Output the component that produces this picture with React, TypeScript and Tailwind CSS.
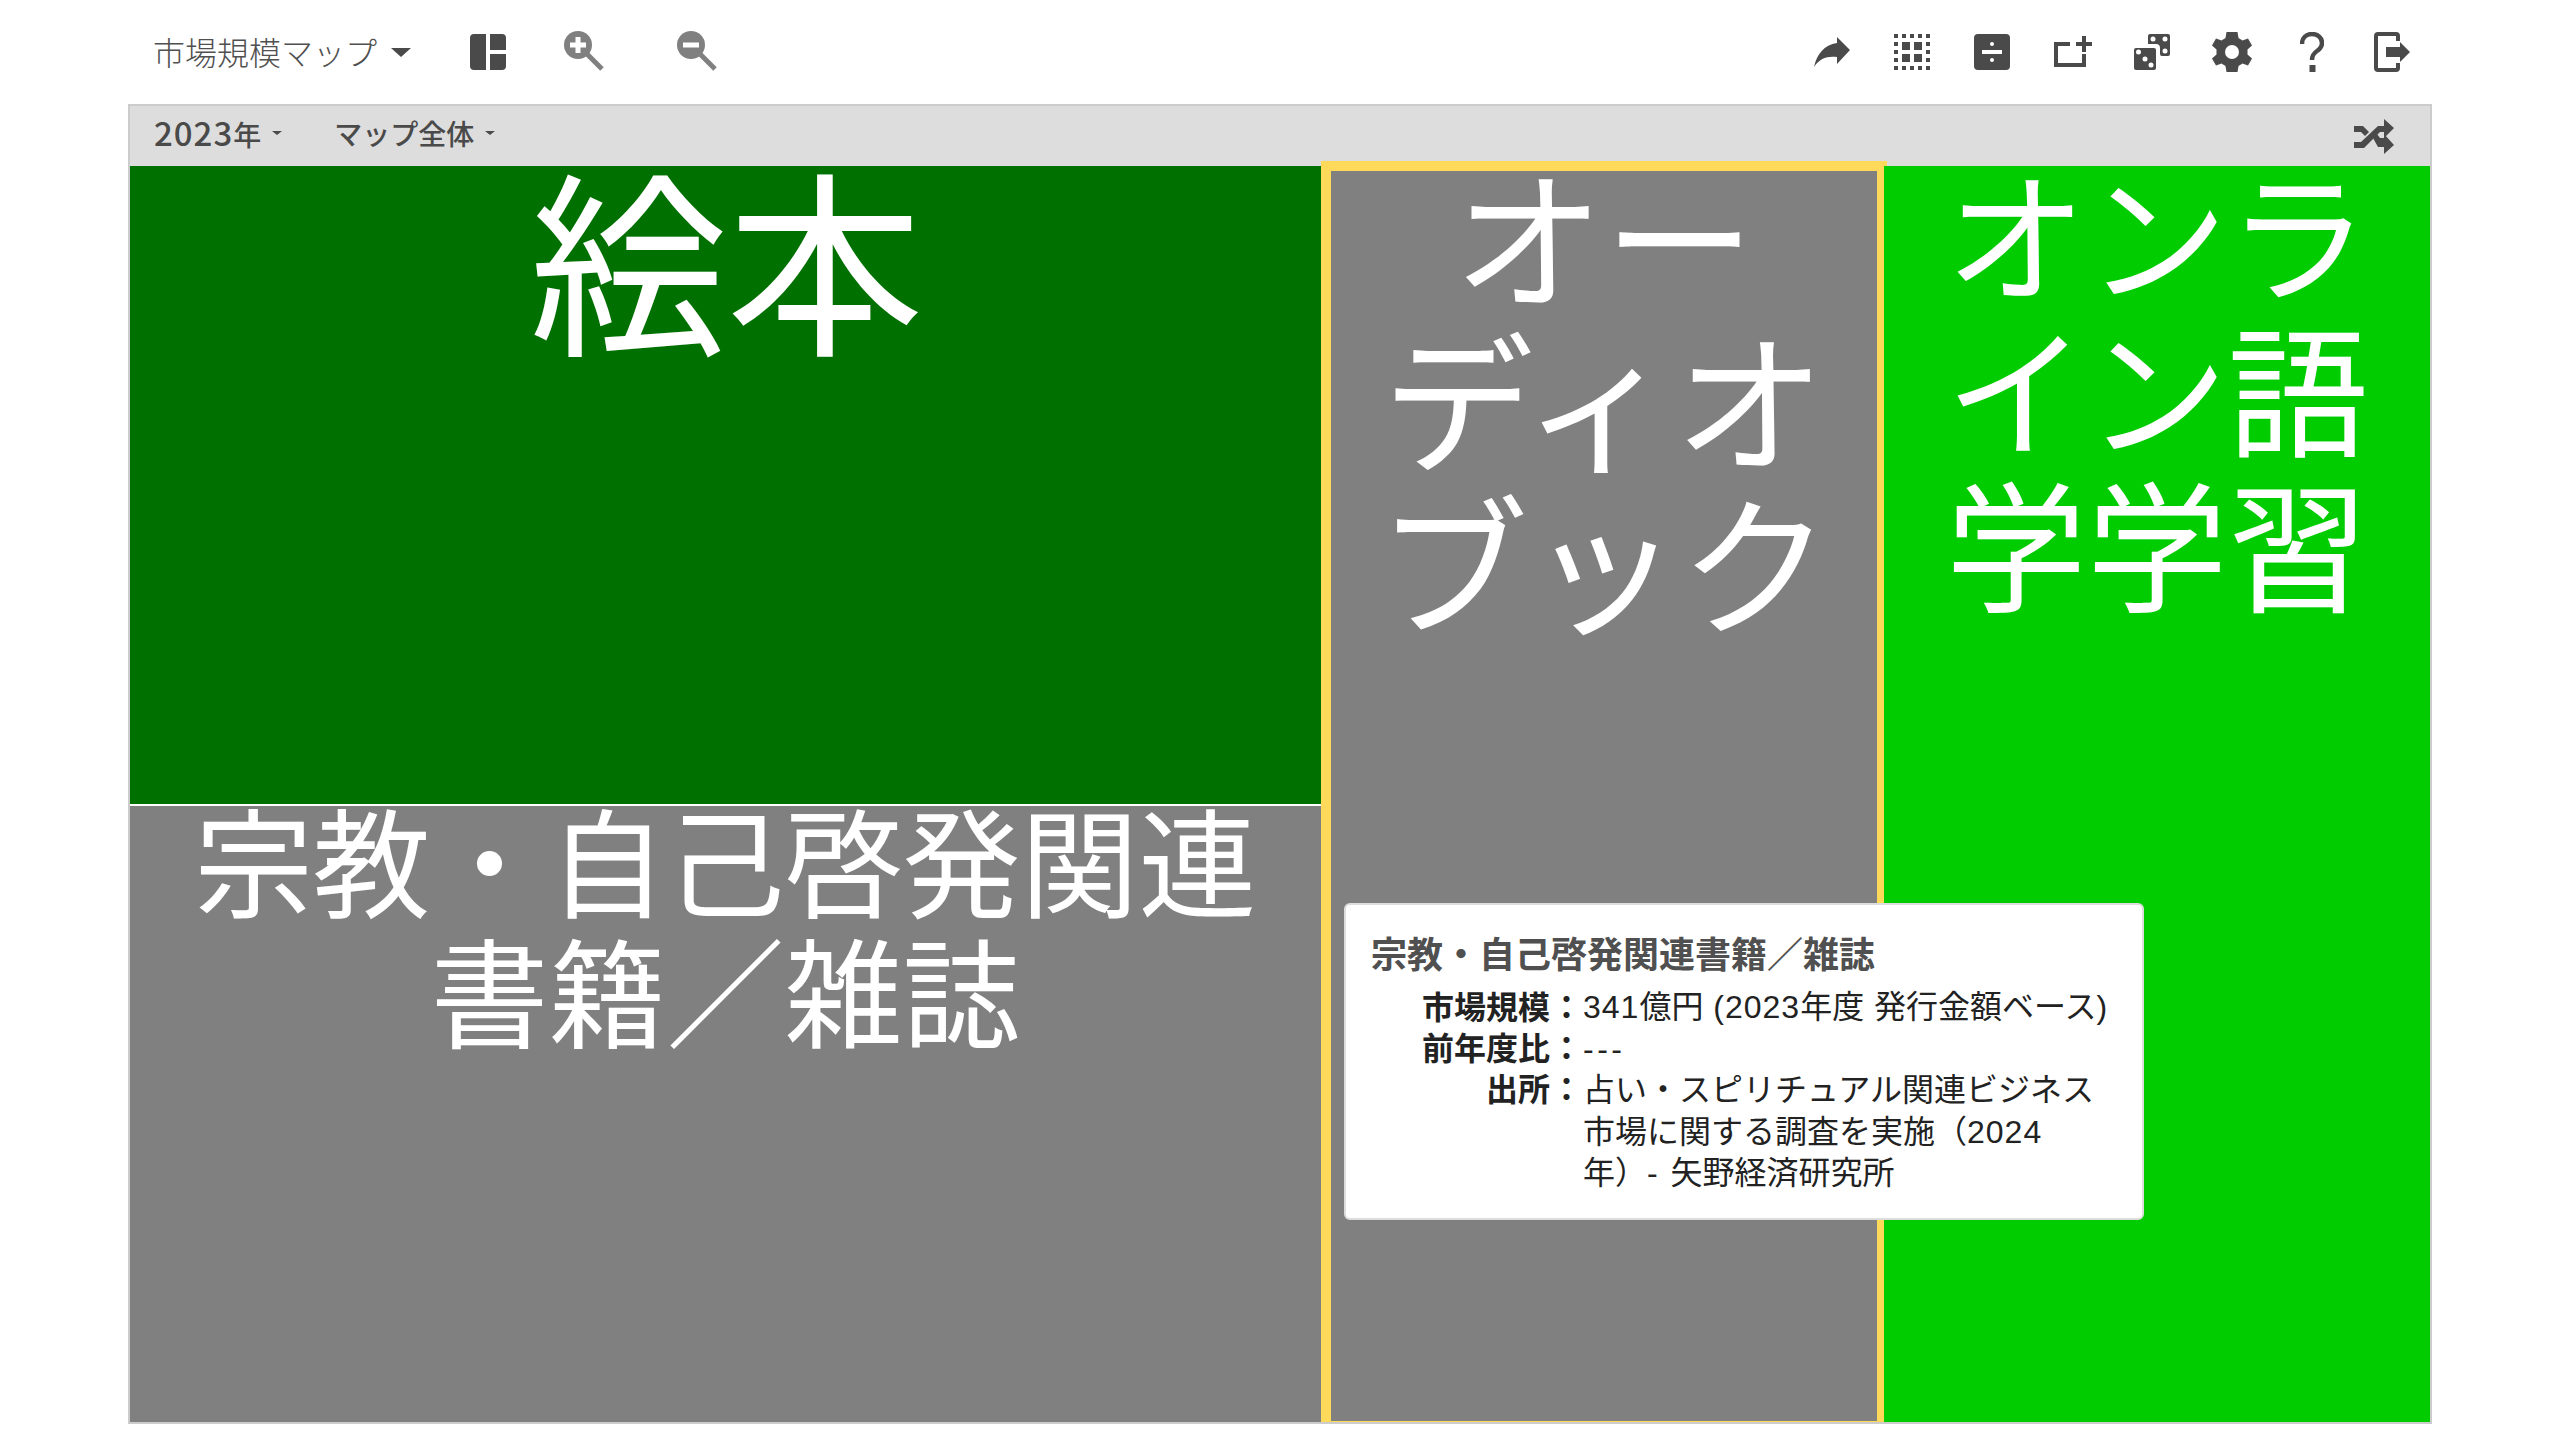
function LayoutIcon() {
  return (
    <svg width="36" height="36" viewBox="0 0 36 36" fill="#4a4a4a">
      <path d="M4 0h12v36H4a4 4 0 0 1-4-4V4a4 4 0 0 1 4-4Z" />
      <path d="M20 0h12a4 4 0 0 1 4 4v12H20Z" />
      <path d="M20 20h16v12a4 4 0 0 1-4 4H20Z" />
    </svg>
  );
}

function ZoomIcon({ plus }: { plus?: boolean }) {
  return (
    <svg width="42" height="42" viewBox="0 0 42 42">
      <circle cx="14" cy="14" r="14" fill="#808080" />
      <path d="M22 22 38 38" stroke="#808080" strokeWidth="5" />
      <path d={plus ? "M6 14h16M14 6v16" : "M6 14h16"} stroke="#fff" strokeWidth="5" />
    </svg>
  );
}

function ShareIcon() {
  return (
    <svg width="36" height="30" viewBox="0 0 36 30" fill="#4a4a4a">
      <path d="M0 30C3 17 10 8 23 6V0l13 13-13 14v-7C13 19 6 21 0 30Z" />
    </svg>
  );
}

function GridIcon() {
  const dots = [2, 10, 18, 26, 34];
  return (
    <svg width="36" height="36" viewBox="0 0 36 36" fill="#4a4a4a">
      {dots.map((p) => (
        <g key={p}>
          <rect x={p - 2} y="0" width="4" height="4" />
          <rect x={p - 2} y="32" width="4" height="4" />
          <rect x="0" y={p - 2} width="4" height="4" />
          <rect x="32" y={p - 2} width="4" height="4" />
        </g>
      ))}
      <rect x="8" y="8" width="8" height="8" />
      <rect x="20" y="8" width="8" height="8" />
      <rect x="8" y="20" width="8" height="8" />
      <rect x="20" y="20" width="8" height="8" />
    </svg>
  );
}

function DivideIcon() {
  return (
    <svg width="36" height="36" viewBox="0 0 36 36">
      <rect width="36" height="36" rx="4" fill="#4a4a4a" />
      <rect x="8" y="16" width="20" height="4" fill="#fff" />
      <circle cx="18" cy="10" r="2" fill="#fff" />
      <circle cx="18" cy="26" r="2" fill="#fff" />
    </svg>
  );
}

function AddBoxIcon() {
  return (
    <svg width="38" height="32" viewBox="0 0 38 32" fill="#4a4a4a">
      <path d="M0 6h16v4H4v17h24v-9h4v13H0Z" />
      <path d="M28 0h4v6h6v4h-6v6h-4v-6h-6V6h6Z" />
    </svg>
  );
}

function DiceIcon() {
  return (
    <svg width="36" height="36" viewBox="0 0 36 36">
      <path
        fill="#4a4a4a"
        d="M14 2a2 2 0 0 1 2-2h18a2 2 0 0 1 2 2v18a2 2 0 0 1-2 2h-6a2 2 0 0 1-2-2v-6a4 4 0 0 0-4-4H14Z"
      />
      <rect x="0" y="14" width="22" height="22" rx="2" fill="#4a4a4a" />
      <g fill="#fff">
        <circle cx="19" cy="5" r="2.5" />
        <circle cx="31" cy="5" r="2.5" />
        <circle cx="31" cy="17" r="2.5" />
        <circle cx="4.5" cy="18" r="2.5" />
        <circle cx="11" cy="25" r="2.5" />
        <circle cx="17" cy="31" r="2.5" />
      </g>
    </svg>
  );
}

function GearIcon() {
  return (
    <svg width="40" height="40" viewBox="0 0 40 40">
      <path
        fill="#4a4a4a"
        d="M14.5 0h11l1 6 4 2.500 5.500-2 4 7-4.500 4v5l4.500 4-4 7-5.500-2-4 2.500-1 6h-11l-1-6-4-2.500-5.500 2-4-7 4.500-4v-5L0 13.500l4-7 5.500 2 4-2.500Z"
      />
      <circle cx="20" cy="20" r="7" fill="#fff" />
    </svg>
  );
}

function HelpIcon() {
  return (
    <svg width="24" height="40" viewBox="0 0 24 40" fill="none">
      <path d="M2 12C2 6 6 2 12 2s10 4 10 9c0 4-2 6-5 8-3 2-5 4-5 9" stroke="#4a4a4a" strokeWidth="4.5" />
      <rect x="9.500" y="33" width="6" height="7" fill="#4a4a4a" />
    </svg>
  );
}

function ExitIcon() {
  return (
    <svg width="36" height="40" viewBox="0 0 36 40">
      <path
        d="M24 9V4a2 2 0 0 0-2-2H4a2 2 0 0 0-2 2v32a2 2 0 0 0 2 2h18a2 2 0 0 0 2-2v-5"
        fill="none"
        stroke="#4a4a4a"
        strokeWidth="4"
      />
      <path fill="#4a4a4a" d="M12 15h14v-5l10 10-10 10v-5H12Z" />
    </svg>
  );
}

function ShuffleIcon() {
  return (
    <svg width="40" height="35" viewBox="0 0 40 35" fill="#4a4a4a">
      <path d="M0 7h9l6 6-4 4-4-4H0Z" />
      <path d="M0 23h7L24 7h6V0l10 9-10 10v-6h-4L10 29H0Z" />
      <path d="M19 19l4-4 3 4h4v-4l10 11-10 9v-7h-6Z" />
    </svg>
  );
}

function Caret() {
  return <span className="ml-[11px] inline-block h-0 w-0 border-x-[5px] border-t-[4px] border-x-transparent border-t-[#4a4a4a]" />;
}

export default function App() {
  return (
    <div className="h-[1440px] w-[2560px] overflow-hidden bg-white font-['Noto_Sans_CJK_JP','Liberation_Sans',sans-serif]">
      {/* toolbar */}
      <div className="flex h-[104px] items-center pl-[153px] pr-[150px]">
        <span className="pb-[3px] text-[32px] font-light text-[#505050]">市場規模マップ</span>
        <span className="ml-[14px] h-0 w-0 border-x-[10px] border-t-[9px] border-x-transparent border-t-[#4a4a4a]" />
        <div className="ml-[59px] flex items-center">
          <LayoutIcon />
          <div className="ml-[58px]">
            <ZoomIcon plus />
          </div>
          <div className="ml-[71px]">
            <ZoomIcon />
          </div>
        </div>
        <div className="ml-auto flex items-center">
          <ShareIcon />
          <div className="ml-[44px]"><GridIcon /></div>
          <div className="ml-[44px]"><DivideIcon /></div>
          <div className="ml-[44px]"><AddBoxIcon /></div>
          <div className="ml-[42px]"><DiceIcon /></div>
          <div className="ml-[42px]"><GearIcon /></div>
          <div className="ml-[48px]"><HelpIcon /></div>
          <div className="ml-[50px]"><ExitIcon /></div>
        </div>
      </div>

      {/* map */}
      <div className="mx-[128px] flex h-[1320px] flex-col border-2 border-[#ccc]">
        <div className="flex h-[60px] shrink-0 items-center bg-[#ddd] pl-[24px] pr-[36px] text-[28px] font-medium text-[#4a4a4a]">
          <div className="flex items-center pb-[6px]">
            <span>
              <span className="text-[33px] tracking-[1px]">2023</span>年
            </span>
            <Caret />
            <span className="ml-[52px]">マップ全体</span>
            <Caret />
          </div>
          <div className="ml-auto">
            <ShuffleIcon />
          </div>
        </div>

        <div className="flex min-h-0 flex-1 text-center text-white">
          <div className="flex w-[1191px] flex-col">
            <div className="h-[638px] bg-[#007000] pl-[2px] text-[197px] leading-[176px]">絵本</div>
            <div className="h-[2px] bg-white" />
            <div className="flex-1 bg-[#808080] px-[40px] text-[118px] leading-[130px]">
              <div className="-mt-[13px]">宗教・自己啓発関連書籍／雑誌</div>
            </div>
          </div>

          <div className="relative z-10 -mt-[5px] w-[566px] border-x-[10px] border-b border-t-[10px] border-[#ffd95a] bg-[#808080] text-[151px] leading-[163px]">
            <div className="-mt-[20px]">
              オー
              <br />
              ディオ
              <br />
              ブック
            </div>
          </div>

          <div className="relative z-20 -ml-[3px] flex-1 bg-[#00cc00] text-[141px] leading-[155px]">
            <div className="-mt-[14px]">
              オンラ
              <br />
              イン語
              <br />
              学学習
            </div>
          </div>
        </div>
      </div>

      {/* tooltip */}
      <div className="absolute left-[1344px] top-[903px] z-30 w-[800px] rounded-[6px] border-2 border-[#ddd] bg-white pb-[23px] pl-[25px] pr-[24px] pt-[21px] font-['Liberation_Sans','Noto_Sans_CJK_JP',sans-serif] text-[32px] leading-[41.6px] text-[#222]">
        <div className="mb-[9px] font-['Noto_Sans_CJK_JP',sans-serif] text-[36px] font-bold leading-[52px] text-[#505050]">
          宗教・自己啓発関連書籍／雑誌
        </div>
        <div className="grid grid-cols-[179px_33px_1fr]">
          <div className="-mt-[2px] text-right font-['Noto_Sans_CJK_JP',sans-serif] font-bold">市場規模</div>
          <div className="-mt-[2px] text-center font-['Noto_Sans_CJK_JP',sans-serif] font-bold">：</div>
          <div className="whitespace-nowrap">
            <span className="tracking-[1px]">341</span>億円<span className="tracking-[1px]"> (2023</span>年度<span className="tracking-[1px]"> </span>発行金額ベース<span className="tracking-[1px]">)</span>
          </div>
          <div className="-mt-[3px] text-right font-['Noto_Sans_CJK_JP',sans-serif] font-bold">前年度比</div>
          <div className="-mt-[3px] text-center font-['Noto_Sans_CJK_JP',sans-serif] font-bold">：</div>
          <div className="tracking-[3.5px]">---</div>
          <div className="-mt-[3px] text-right font-['Noto_Sans_CJK_JP',sans-serif] font-bold">出所</div>
          <div className="-mt-[3px] text-center font-['Noto_Sans_CJK_JP',sans-serif] font-bold">：</div>
          <div>
            占い・スピリチュアル関連ビジネス
            <br />
            市場に関する調査を実施（<span className="tracking-[1px]">2024</span>
            <br />
            年）<span className="tracking-[2px]">- </span>矢野経済研究所
          </div>
        </div>
      </div>
    </div>
  );
}
